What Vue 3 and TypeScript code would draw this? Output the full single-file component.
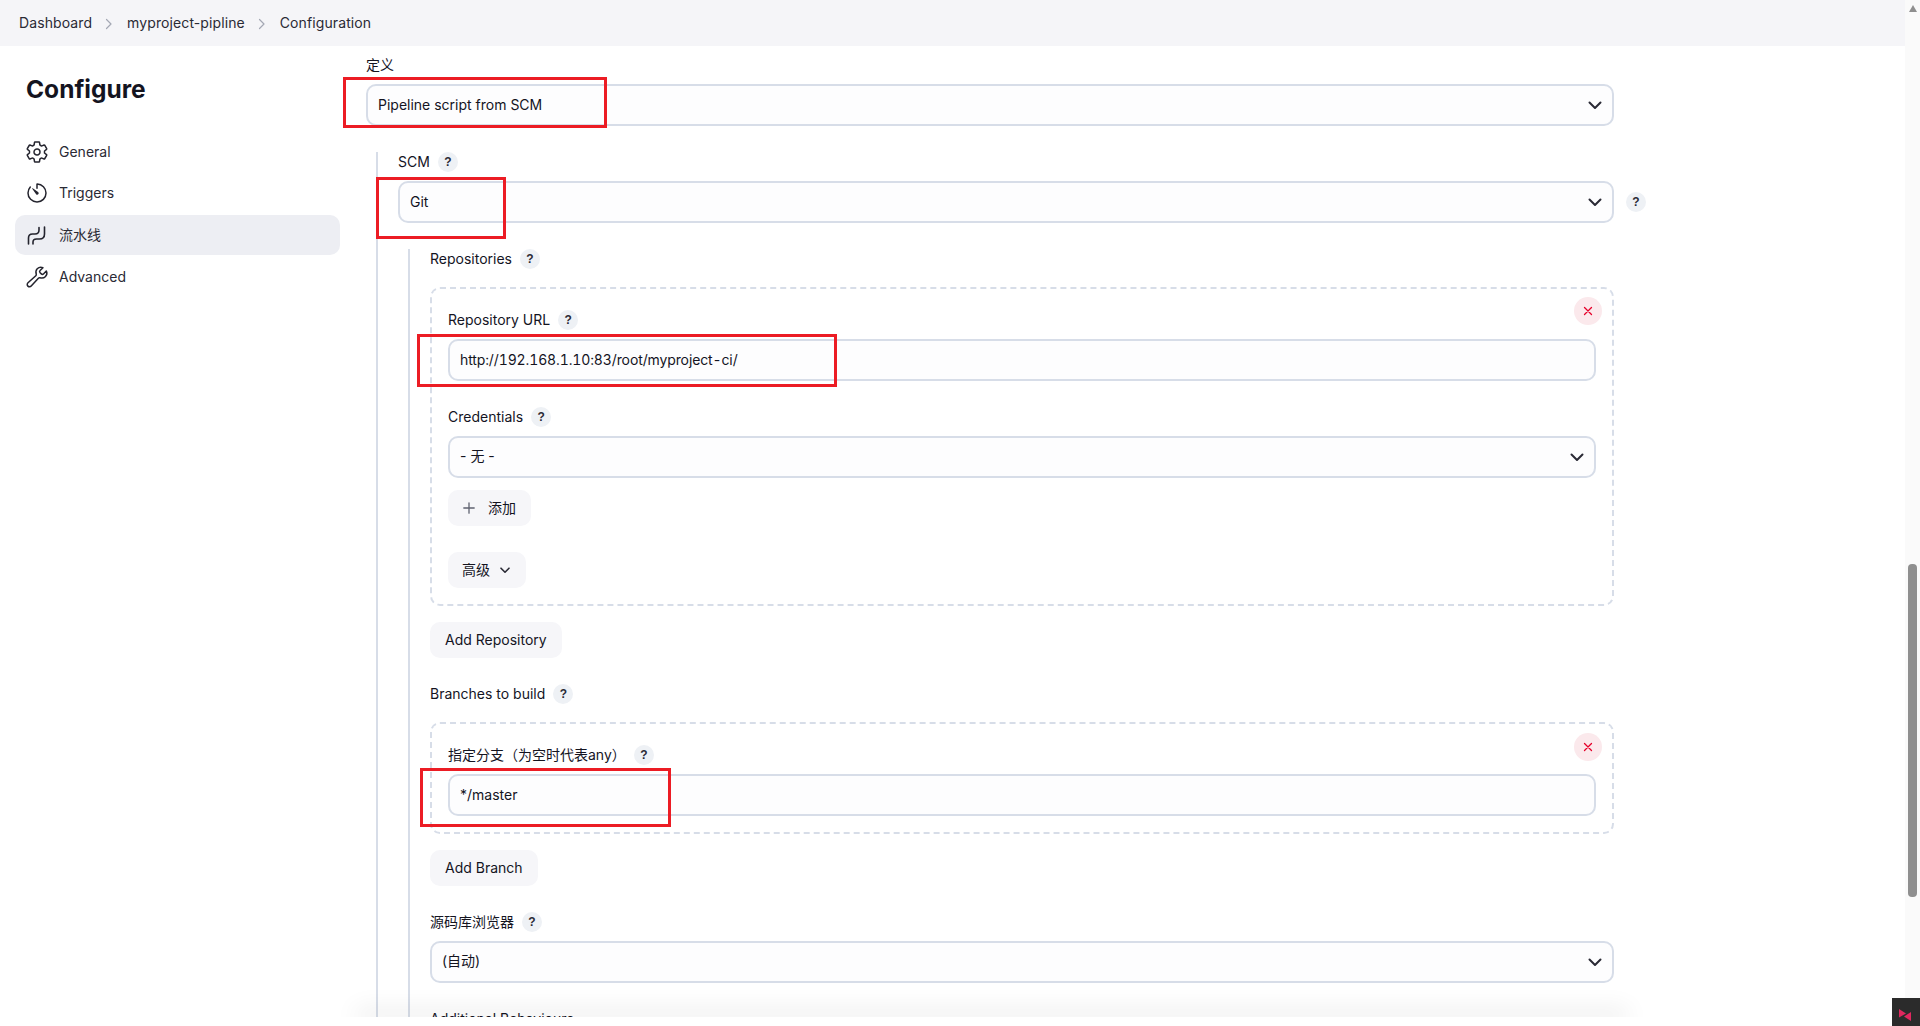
<script setup lang="ts">
interface Crumb { label: string }
const crumbs: Crumb[] = [
  { label: 'Dashboard' },
  { label: 'myproject-pipline' },
  { label: 'Configuration' },
]
</script>

<template>
  <div class="page">
    <div class="window">
      <header class="crumbs">
        <template v-for="(c, i) in crumbs" :key="c.label">
          <svg v-if="i > 0" class="crumb-sep" width="8" height="12" viewBox="0 0 8 12" fill="none">
            <path d="M1.5 1.5 6 6l-4.5 4.5" stroke="#a4a8b4" stroke-width="1.2" stroke-linecap="round" stroke-linejoin="round" />
          </svg>
          <span class="crumb">{{ c.label }}</span>
        </template>
      </header>

      <div class="body">
        <aside class="side">
          <h1 class="title">Configure</h1>
          <nav class="nav">
            <a class="nav-item">
              <svg class="nav-icon" viewBox="0 0 512 512" fill="none" stroke="currentColor" stroke-width="32" stroke-linecap="round" stroke-linejoin="round">
                <path d="M262.29 192.31a64 64 0 1057.4 57.4 64.13 64.13 0 00-57.4-57.4zM416.39 256a154.34 154.34 0 01-1.53 20.79l45.21 35.46a10.81 10.81 0 012.45 13.75l-42.77 74a10.81 10.81 0 01-13.14 4.59l-44.9-18.08a16.11 16.11 0 00-15.17 1.75A164.48 164.48 0 01325 400.8a15.94 15.94 0 00-8.82 12.14l-6.73 47.89a11.08 11.08 0 01-10.68 9.17h-85.54a11.11 11.11 0 01-10.69-8.87l-6.72-47.82a16.07 16.07 0 00-9-12.22 155.3 155.3 0 01-21.46-12.57 16 16 0 00-15.11-1.71l-44.89 18.07a10.81 10.81 0 01-13.14-4.58l-42.77-74a10.8 10.8 0 012.45-13.75l38.21-30a16.05 16.05 0 006-14.08c-.36-4.17-.58-8.33-.58-12.5s.21-8.27.58-12.35a16 16 0 00-6.07-13.94l-38.19-30A10.81 10.81 0 0149.48 186l42.77-74a10.81 10.81 0 0113.14-4.59l44.9 18.08a16.11 16.11 0 0015.17-1.75A164.48 164.48 0 01187 111.2a15.94 15.94 0 008.82-12.14l6.73-47.89A11.08 11.08 0 01213.23 42h85.54a11.11 11.11 0 0110.69 8.87l6.72 47.82a16.07 16.07 0 009 12.22 155.3 155.3 0 0121.46 12.57 16 16 0 0015.11 1.71l44.89-18.07a10.81 10.81 0 0113.14 4.58l42.77 74a10.8 10.8 0 01-2.45 13.75l-38.21 30a16.05 16.05 0 00-6.05 14.08c.33 4.14.55 8.3.55 12.47z" />
              </svg>
              <span>General</span>
            </a>
            <a class="nav-item">
              <svg class="nav-icon" viewBox="0 0 512 512" fill="none" stroke="currentColor" stroke-width="32" stroke-linecap="round" stroke-linejoin="round">
                <path d="M112.91 128A191.85 191.85 0 0064 254c-1.18 106.35 85.65 193.8 192 194 106.2.2 192-85.83 192-192 0-104.54-83.55-189.61-187.5-192a4.36 4.36 0 00-4.5 4.37V152" />
                <path d="M233.38 278.63l-79-113a8.13 8.13 0 0111.32-11.32l113 79a32.5 32.5 0 01-37.25 53.26 33.21 33.21 0 01-8.07-8.94z" fill="currentColor" stroke="none" />
              </svg>
              <span>Triggers</span>
            </a>
            <a class="nav-item active">
              <svg class="nav-icon" viewBox="-2 -2 24 24" fill="none" stroke="currentColor" stroke-width="1.6" stroke-linecap="round" stroke-linejoin="round">
                <path d="M1.5 19v-6q0-4 4-4H8q4 0 4-4V2.5" />
                <path d="M6 19v-2q0-3 3.5-3h3q5 0 5-5V2" />
              </svg>
              <span>流水线</span>
            </a>
            <a class="nav-item">
              <svg class="nav-icon" viewBox="0 0 512 512" fill="none" stroke="currentColor" stroke-width="32" stroke-linecap="round" stroke-linejoin="round">
                <path d="M393.87 190a32.1 32.1 0 01-45.25 0l-26.57-26.57a32.09 32.09 0 010-45.26L382.19 58a1 1 0 00-.3-1.64c-38.82-16.64-89.15-8.16-121.11 23.57-30.58 30.35-32.32 76-21.12 115.84a31.93 31.93 0 01-9.06 32.08L64 380a48.17 48.17 0 1068 68l153.86-167a31.93 31.93 0 0131.6-9.13c39.54 10.59 84.54 8.6 114.72-21.19 32.49-32 39.5-88.56 23.75-120.93a1 1 0 00-1.6-.26z" />
              </svg>
              <span>Advanced</span>
            </a>
          </nav>
        </aside>

        <main class="main">
          <div class="label">定义</div>
          <div class="control">
            <select class="field select"><option>Pipeline script from SCM</option></select>
            <svg class="chev" width="14" height="9" viewBox="0 0 14 9" fill="none"><path d="M1.5 1.5 7 7l5.5-5.5" stroke="#2a2a35" stroke-width="2" stroke-linecap="round" stroke-linejoin="round" /></svg>
            <i class="red red-def"></i>
          </div>

          <section class="nest scm">
            <div class="label">SCM<span class="help">?</span></div>
            <div class="with-help">
              <div class="control grow">
                <select class="field select"><option>Git</option></select>
                <svg class="chev" width="14" height="9" viewBox="0 0 14 9" fill="none"><path d="M1.5 1.5 7 7l5.5-5.5" stroke="#2a2a35" stroke-width="2" stroke-linecap="round" stroke-linejoin="round" /></svg>
                <i class="red red-git"></i>
              </div>
              <span class="help">?</span>
            </div>

            <section class="nest git">
              <div class="label">Repositories<span class="help">?</span></div>
              <div class="repeat">
                <button class="remove" type="button" aria-label="remove">
                  <svg width="10" height="10" viewBox="0 0 10 10" fill="none"><path d="M1.5 1.5l7 7m0-7-7 7" stroke="#e6002a" stroke-width="1.3" stroke-linecap="round" /></svg>
                </button>
                <div class="label">Repository URL<span class="help">?</span></div>
                <div class="control">
                  <input class="field raised url" value="http://192.168.1.10:83/root/myproject-ci/" />
                  <i class="red red-url"></i>
                </div>
                <div class="label gap">Credentials<span class="help">?</span></div>
                <div class="control">
                  <select class="field select raised"><option>- 无 -</option></select>
                  <svg class="chev" width="14" height="9" viewBox="0 0 14 9" fill="none"><path d="M1.5 1.5 7 7l5.5-5.5" stroke="#2a2a35" stroke-width="2" stroke-linecap="round" stroke-linejoin="round" /></svg>
                </div>
                <button class="btn add" type="button">
                  <svg width="12" height="12" viewBox="0 0 12 12" fill="none"><path d="M6 .8v10.4M.8 6h10.4" stroke="#5f6270" stroke-width="1.3" stroke-linecap="round" /></svg>
                  添加
                </button>
                <button class="btn adv" type="button">
                  高级
                  <svg width="10" height="7" viewBox="0 0 10 7" fill="none"><path d="M1 1.2 5 5.2l4-4" stroke="#2a2a35" stroke-width="1.6" stroke-linecap="round" stroke-linejoin="round" /></svg>
                </button>
              </div>
              <button class="btn after" type="button">Add Repository</button>

              <div class="label gap">Branches to build<span class="help">?</span></div>
              <div class="repeat second">
                <button class="remove" type="button" aria-label="remove">
                  <svg width="10" height="10" viewBox="0 0 10 10" fill="none"><path d="M1.5 1.5l7 7m0-7-7 7" stroke="#e6002a" stroke-width="1.3" stroke-linecap="round" /></svg>
                </button>
                <div class="label">指定分支（为空时代表any）<span class="help">?</span></div>
                <div class="control">
                  <input class="field raised" value="*/master" />
                  <i class="red red-branch"></i>
                </div>
              </div>
              <button class="btn after" type="button">Add Branch</button>

              <div class="label gap">源码库浏览器<span class="help">?</span></div>
              <div class="control">
                <select class="field select raised"><option>(自动)</option></select>
                <svg class="chev" width="14" height="9" viewBox="0 0 14 9" fill="none"><path d="M1.5 1.5 7 7l5.5-5.5" stroke="#2a2a35" stroke-width="2" stroke-linecap="round" stroke-linejoin="round" /></svg>
              </div>
              <div class="label gap">Additional Behaviours</div>
            </section>
          </section>
        </main>
      </div>
    </div>

    <div class="scrollbar">
      <span class="arrow"></span>
      <span class="thumb"></span>
    </div>

    <div class="sheet"></div>
    <div class="widget">
      <svg width="12" height="12" viewBox="0 0 12 12"><path d="M0 0v8.5L7 4.5zM12 3v9L5 7.5z" fill="#e0285f" /></svg>
    </div>
  </div>
</template>

<style>
html, body { margin: 0; background: #fff; overflow: hidden; }
</style>

<style scoped>
.page {
  position: relative;
  display: flex;
  width: 1920px;
  height: 1026px;
  overflow: hidden;
  background: #fff;
  color: #14141f;
  font: 14px/20px "Inter", "Noto Sans CJK SC", sans-serif;
}
.window { width: 1905px; display: flex; flex-direction: column; }
.crumbs {
  flex: none;
  height: 46px;
  box-sizing: border-box;
  padding-left: 19px;
  display: flex;
  align-items: center;
  background: #f5f5f8;
  color: #2a2a35;
  letter-spacing: 0.1px;
}
.crumb-sep { margin: 1px 14px 0 13px; }
.body { flex: 1; min-height: 0; display: flex; }
.side { flex: none; width: 325px; margin-left: 15px; }
.title {
  margin: 27px 0 26px 11px;
  font-size: 24.5px;
  line-height: 32px;
  font-weight: 700;
  color: #14141f;
}
.nav { display: flex; flex-direction: column; gap: 2px; }
.nav-item {
  height: 40px;
  box-sizing: border-box;
  padding-left: 10px;
  display: flex;
  align-items: center;
  gap: 10px;
  border-radius: 10px;
  color: #2a2a35;
}
.nav-item:first-child { margin-bottom: -1px; transform: translateY(1px); }
.nav-item:nth-child(2) { margin-top: 1px; }
.nav-item.active { background: #edeef3; }
.nav-icon { width: 24px; height: 24px; flex: none; color: #24242e; }

.main { flex: none; width: 1248px; margin-left: 26px; padding-top: 9px; overflow: visible; }
.label { display: flex; align-items: center; gap: 8px; height: 20px; margin-bottom: 9px; white-space: nowrap; }
.label.gap { margin-top: 26px; }
.help {
  width: 20px;
  height: 20px;
  border-radius: 50%;
  background: #eef1f5;
  color: #2a2a35;
  font: 700 12px/20px "Liberation Sans", sans-serif;
  text-align: center;
  flex: none;
}
.control { position: relative; }
.grow { flex: 1; min-width: 0; }
.field {
  display: block;
  width: 100%;
  height: 42px;
  box-sizing: border-box;
  padding: 0 10px;
  border: 2px solid #d7dde8;
  border-radius: 10px;
  background: #fdfdfe;
  color: #14141f;
  font: inherit;
  outline: none;
}
.raised { padding-bottom: 2px; }
.url { letter-spacing: -0.12px; font-variant-numeric: tabular-nums; }
.select { appearance: none; -webkit-appearance: none; }
.chev { position: absolute; right: 12px; top: 17px; pointer-events: none; }
.red {
  position: absolute;
  box-sizing: border-box;
  border: 3px solid #ec1c24;
  pointer-events: none;
}
.red-def { left: -23px; top: -7px; width: 264px; height: 51px; }
.red-git { left: -22px; top: -4px; width: 130px; height: 62px; }
.red-url { left: -31px; top: -5px; width: 420px; height: 53px; }
.red-branch { left: -28px; top: -6px; width: 251px; height: 59px; }

.nest { border-left: 2px solid #d7dde8; padding-left: 20px; }
.scm { margin: 26px 0 0 10px; }
.with-help { display: flex; align-items: center; gap: 12px; margin-right: -32px; }
.git { margin: 26px 0 0 10px; padding-bottom: 60px; }

.repeat {
  position: relative;
  margin-top: 18px;
  padding: 21px 16px 16px;
  border: 2px dashed #d7dde8;
  border-radius: 10px;
}
.remove {
  position: absolute;
  top: 8px;
  right: 10px;
  width: 28px;
  height: 28px;
  padding: 0;
  border: 0;
  border-radius: 50%;
  background: #fbe9ec;
  display: flex;
  align-items: center;
  justify-content: center;
}
.second .remove { top: 9px; }
.btn {
  display: flex;
  align-items: center;
  height: 36px;
  padding: 0 15px;
  border: 0;
  border-radius: 10px;
  background: #f6f6f9;
  color: #14141f;
  font: inherit;
}
.add { margin-top: 12px; gap: 13px; }
.adv { margin-top: 26px; gap: 10px; padding: 0 16px 0 14px; }
.after { margin-top: 16px; }

.scrollbar {
  width: 15px;
  height: 100%;
  background: #fafafa;
  position: relative;
  display: flex;
  flex-direction: column;
  align-items: center;
}
.arrow {
  margin-top: 5px;
  width: 0;
  height: 0;
  border-left: 4.5px solid transparent;
  border-right: 4.5px solid transparent;
  border-bottom: 7px solid #8f8f8f;
}
.thumb {
  margin-top: 552px;
  width: 9px;
  height: 333px;
  border-radius: 4px;
  background: #8f8f8f;
}
.sheet {
  position: absolute;
  left: 356px;
  top: 1017px;
  width: 1272px;
  height: 9px;
  background: #fff;
  box-shadow: 0 -6px 24px rgba(0, 0, 0, 0.12);
}
.sheet::after {
  content: "";
  position: absolute;
  left: -356px;
  top: 0;
  width: 1905px;
  height: 9px;
  background: #fff;
}
.widget {
  position: absolute;
  right: 0;
  bottom: 0;
  width: 28px;
  height: 28px;
  background: #2b2b2b;
  display: flex;
  align-items: center;
  justify-content: center;
  padding: 6px 2px 0 0;
  box-sizing: border-box;
}
</style>
